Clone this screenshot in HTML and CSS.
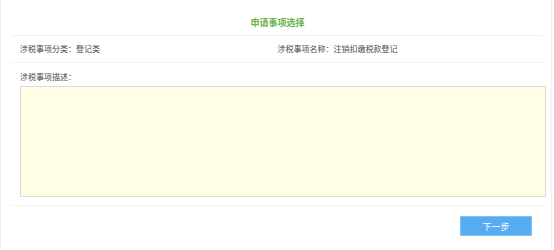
FILE: index.html
```html
<!DOCTYPE html>
<html lang="zh-CN">
<head>
  <meta charset="UTF-8">
  <title>申请事项选择</title>
  <link rel="stylesheet" href="styles.css">
</head>
<body>
  <div class="panel">
    <div class="title">申请事项选择</div>
    <div class="info-row">
      <div>涉税事项分类：登记类</div>
      <div>涉税事项名称：注销扣缴税款登记</div>
    </div>
    <div class="desc">
      <div class="desc-label">涉税事项描述：</div>
      <textarea class="desc-box"></textarea>
    </div>
    <div class="footer">
      <button class="btn-next">下一步</button>
    </div>
  </div>
</body>
</html>
```

FILE: styles.css
```css
body { margin: 0; background: #fff; font-family: "Noto Sans CJK SC", "Noto Sans", sans-serif; color: #4a4a4a; }
.panel { width: 552px; height: 250px; box-sizing: border-box; border-left: 1px solid #f0f0f0; border-right: 1px solid #f0f0f0; }
.title { margin: 0 8px 0 11px; height: 36px; box-sizing: border-box; padding-top: 18px; line-height: 10px; font-size: 9px; font-weight: bold; color: #66b244; text-align: center; border-bottom: 1px solid #f2f2f2; }
.info-row { margin: 0 8px 0 11px; display: grid; grid-template-columns: 1fr 1fr; padding: 0 8px; height: 27px; box-sizing: border-box; line-height: 26px; font-size: 8px; border-bottom: 1px solid #f2f2f2; }
.desc { margin: 0 8px 0 11px; padding: 9px 0 8px 8px; border-bottom: 1px solid #f2f2f2; }
.desc-label { font-size: 8px; line-height: 10px; }
.desc-box { display: block; margin: 4px 0 0 0; width: 526px; height: 111px; box-sizing: border-box; background: #fffee4; border: 1px solid #dcdcd2; resize: none; padding: 4px; font-size: 8px; }
.footer { display: flex; justify-content: flex-end; padding: 10px 19px 0 0; }
.btn-next { width: 72px; height: 20px; padding: 0; background: #55acf2; border: 1px solid #82c3f6; color: #fff; font-family: inherit; font-size: 9px; cursor: pointer; }
```
